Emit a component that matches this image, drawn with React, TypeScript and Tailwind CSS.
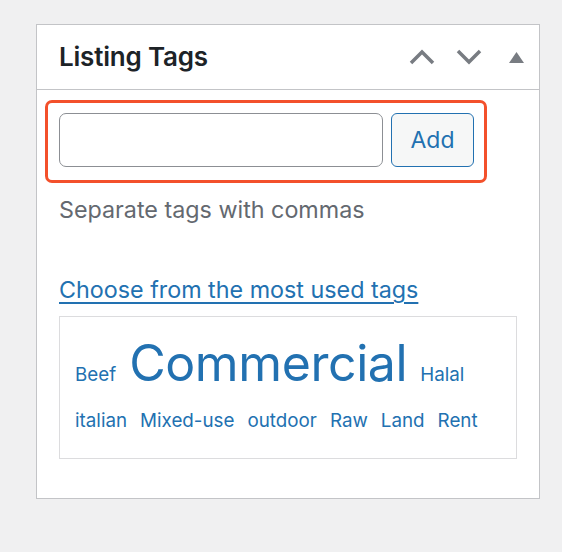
import React from 'react';

const tags = [
  { name: 'Beef', size: 'small' },
  { name: 'Commercial', size: 'big' },
  { name: 'Halal', size: 'small' },
  { name: 'italian', size: 'small' },
  { name: 'Mixed-use', size: 'small' },
  { name: 'outdoor', size: 'small' },
  { name: 'Raw', size: 'small' },
  { name: 'Land', size: 'small' },
  { name: 'Rent', size: 'small' },
];

const ChevronUp = () => (
  <svg width="26" height="16" viewBox="0 0 26 16" fill="none">
    <path d="M2 14 L13 3 L24 14" stroke="#787c82" strokeWidth="3.5" />
  </svg>
);

const ChevronDown = () => (
  <svg width="26" height="16" viewBox="0 0 26 16" fill="none">
    <path d="M2 2 L13 13 L24 2" stroke="#787c82" strokeWidth="3.5" />
  </svg>
);

const Triangle = () => (
  <svg width="15" height="11" viewBox="0 0 15 11">
    <path d="M7.5 0 L15 11 L0 11 Z" fill="#787c82" />
  </svg>
);

const App = () => {
  return (
    <div
      className="min-h-[552px] bg-[#f0f0f1] pt-[24px] pl-[36px]"
      style={{ fontFamily: 'Inter, "Noto Sans", sans-serif' }}
    >
      <div className="w-[504px] h-[475px] bg-white border border-[#c3c4c7]">
        <div className="h-[65px] border-b border-[#c3c4c7] flex items-center pl-[22px] pr-[15px]">
          <h2 className="text-[26px] font-semibold text-[#1d2327] leading-none tracking-[-0.2px]">
            Listing Tags
          </h2>
          <div className="ml-auto flex items-center">
            <button type="button" className="w-[47px] flex justify-center">
              <ChevronUp />
            </button>
            <button type="button" className="w-[47px] flex justify-center">
              <ChevronDown />
            </button>
            <button type="button" className="w-[32px] flex justify-end">
              <Triangle />
            </button>
          </div>
        </div>

        <div className="px-[22px] pt-[10px]">
          <div className="-mx-[14px] w-[442px] border-[3px] border-[#f3502b] rounded-[7px] pl-[11px] pt-[10px] pb-[13px] flex gap-[8px]">
            <input
              type="text"
              className="w-[324px] h-[54px] border border-[#8c8f94] rounded-[7px] outline-none"
            />
            <button
              type="button"
              className="w-[83px] h-[54px] border border-[#2271b1] rounded-[6px] bg-[#f6f7f7] text-[#2271b1] text-[23px] leading-none"
            >
              Add
            </button>
          </div>

          <p className="mt-[13px] text-[23.3px] leading-[28px] text-[#646970]">
            Separate tags with commas
          </p>

          <a
            href="#"
            className="block mt-[52px] text-[23.3px] leading-[28px] text-[#2271b1] underline underline-offset-[4px] decoration-[2px]"
          >
            Choose from the most used tags
          </a>

          <div className="mt-[12px] border border-[#dcdcde] pt-[16px] pb-[22px] pl-[15px] pr-[10px]">
            <div className="flex flex-wrap items-baseline gap-x-[13px] gap-y-[13px]">
              {tags.map((tag) => (
                <a
                  key={tag.name}
                  href="#"
                  className={
                    tag.size === 'big'
                      ? 'text-[50px] leading-[60px] text-[#2271b1] tracking-[-0.4px]'
                      : 'text-[18.8px] leading-[30px] text-[#2271b1]'
                  }
                >
                  {tag.name}
                </a>
              ))}
            </div>
          </div>
        </div>
      </div>
    </div>
  );
};

export default App;
